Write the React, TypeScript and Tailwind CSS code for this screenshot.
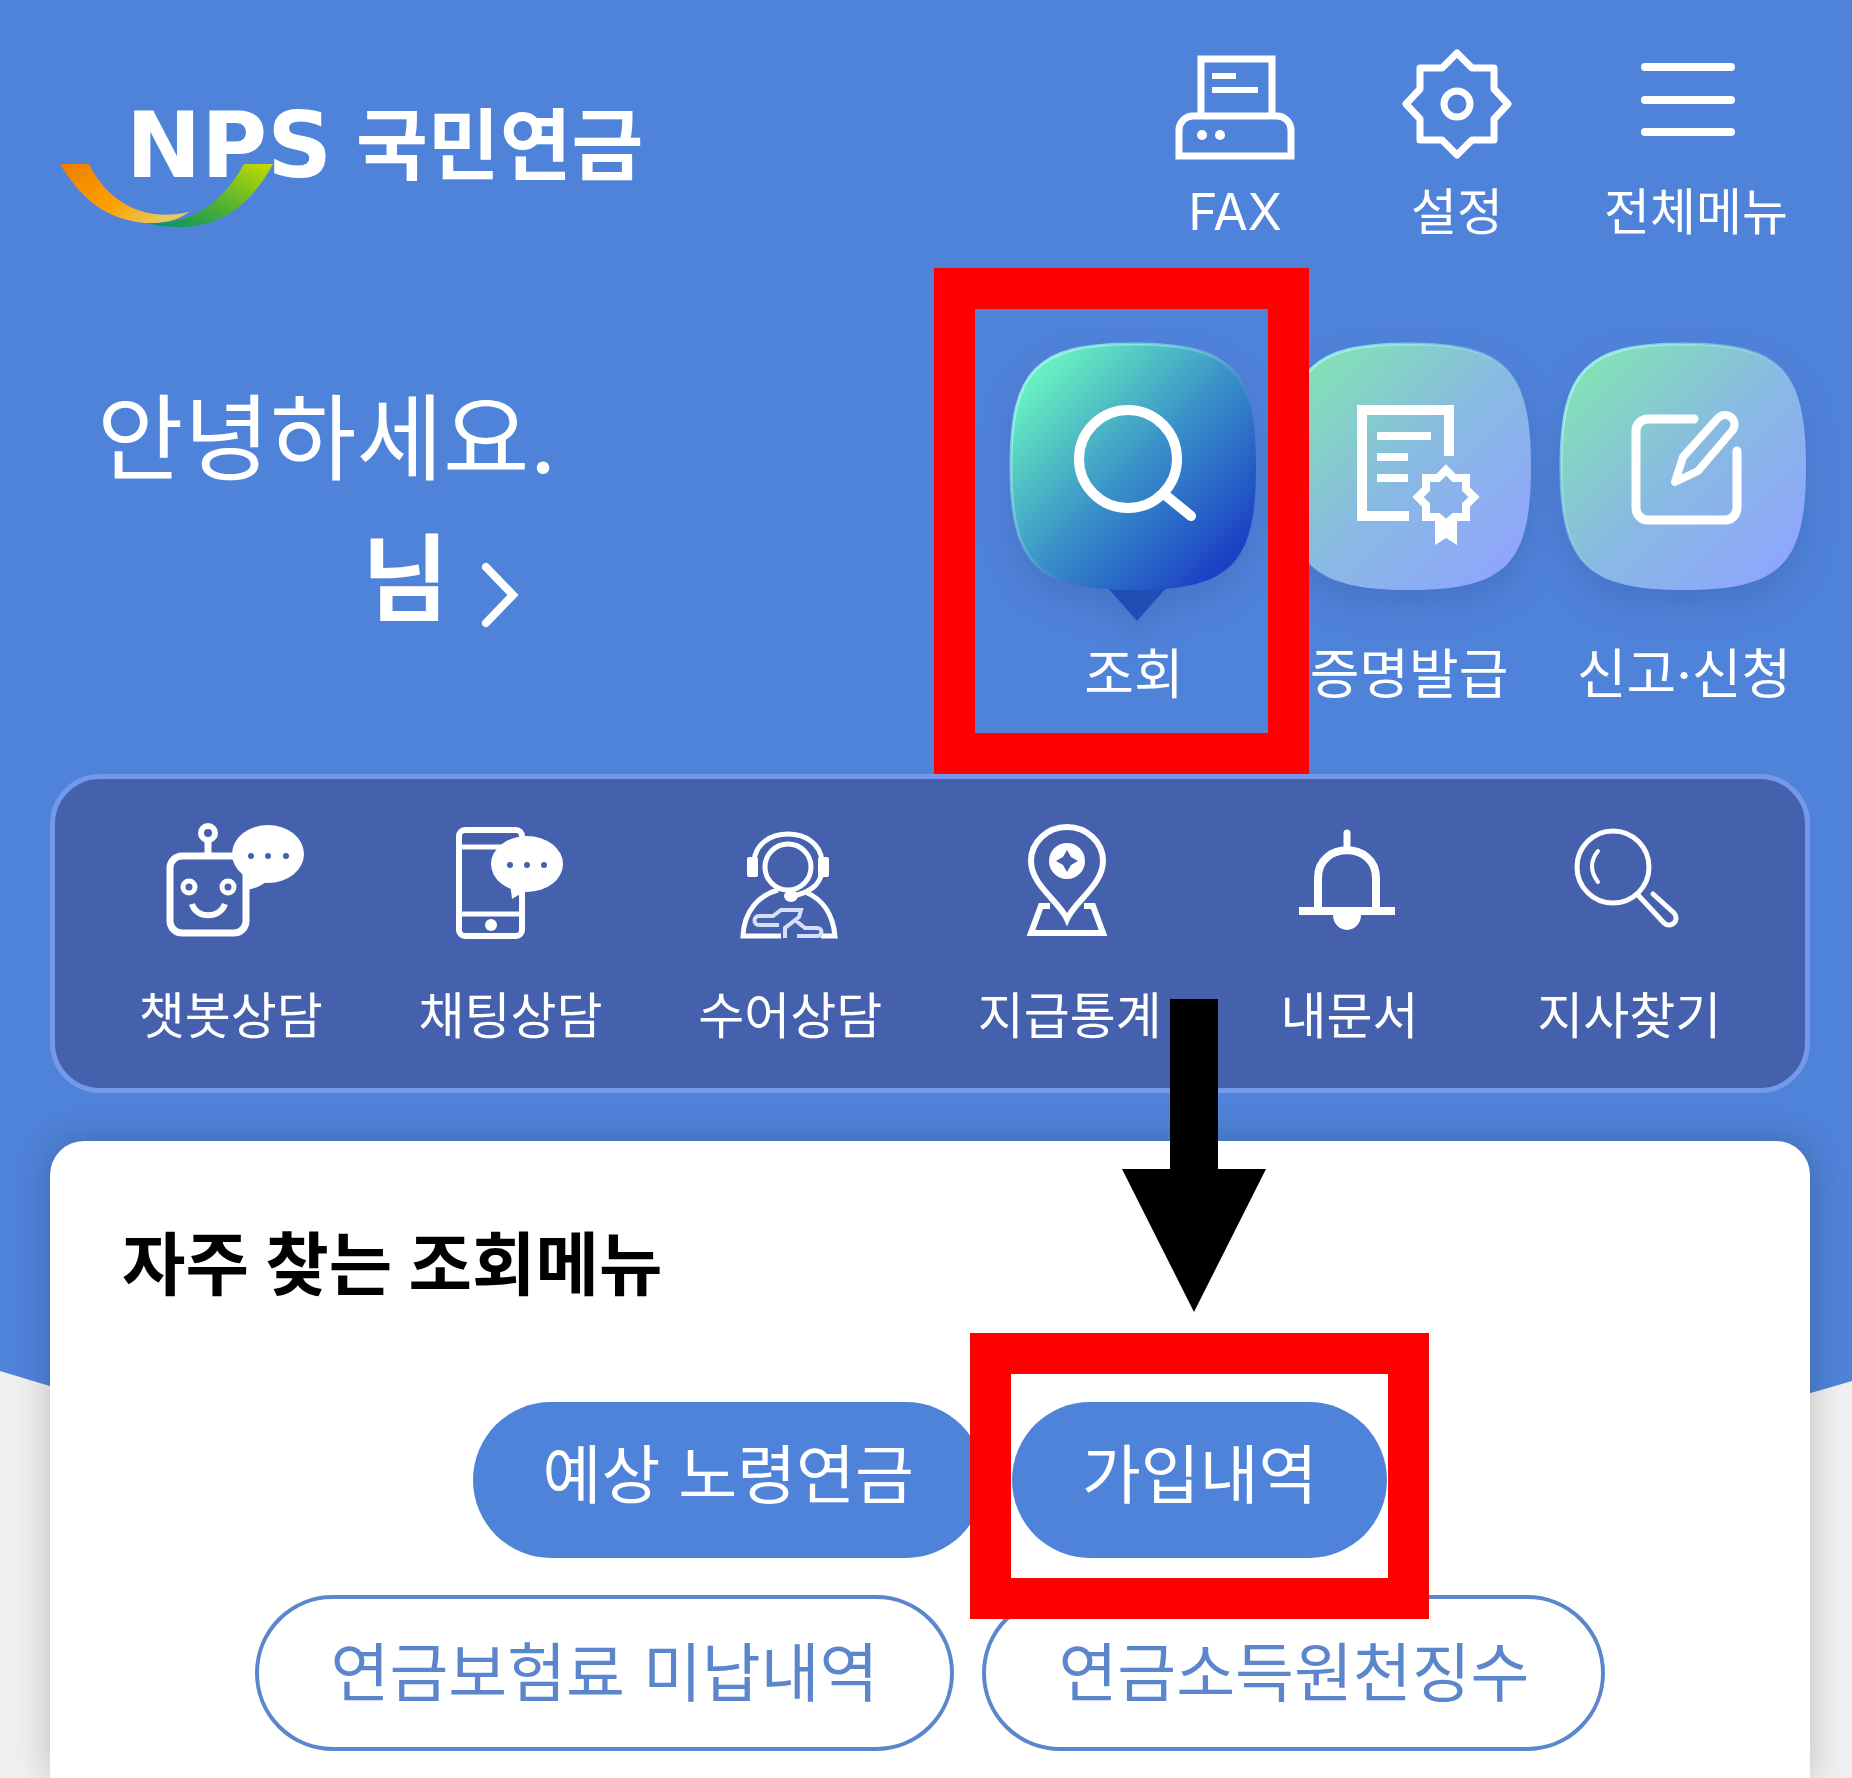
import React from 'react';

interface IconItem {
  label: string;
  icon: React.ReactNode;
}

/* Header icons */

const FaxIcon = () => (
  <svg width="120" height="112" viewBox="0 -6 120 112" fill="none" stroke="white" strokeWidth="7">
    <path d="M26 62V5H97V62" />
    <path d="M4 102V76a14 14 0 0 1 14-14h84a14 14 0 0 1 14 14v26z" />
    <path d="M37 22H61M37 36H83" strokeWidth="6" />
    <circle cx="27" cy="81" r="5" fill="white" stroke="none" />
    <circle cx="45" cy="81" r="5" fill="white" stroke="none" />
  </svg>
);

const GearIcon = () => (
  <svg width="112" height="112" viewBox="-56 -56 112 112" fill="none" stroke="white" strokeWidth="7" strokeLinejoin="round">
    <path d="M0-51L15-36H37V-15L51 0L37 15V36H15L0 51L-15 36H-37V15L-51 0L-37-15V-36H-15Z" />
    <circle r="13" />
  </svg>
);

const MenuIcon = () => (
  <svg width="112" height="84" viewBox="0 0 112 84" stroke="white" strokeWidth="8" strokeLinecap="round">
    <path d="M5 5H91M5 38H91M5 70H91" />
  </svg>
);

/* Speech-bubble buttons on the right of the greeting */

const SHAPE = 'M124 1C221 1 246 27 246 124S221 247 124 247S1 221 1 124S27 1 124 1Z';

const Bubble = ({ id, stops, active, children }: {
  id: string;
  stops: string[];
  active?: boolean;
  children: React.ReactNode;
}) => (
  <svg
    width="248"
    height="248"
    viewBox="0 0 248 248"
    fill="none"
    className="overflow-visible drop-shadow-[0_16px_16px_rgba(50,80,160,0.3)]"
  >
    <defs>
      <linearGradient id={id} x1="0.12" y1="0.12" x2="0.88" y2="0.88">
        <stop offset="0" stopColor={stops[0]} />
        <stop offset="0.5" stopColor={stops[1]} />
        <stop offset="1" stopColor={stops[2]} />
      </linearGradient>
      <linearGradient id={`${id}-edge`} x1="0" y1="0" x2="1" y2="1">
        <stop offset="0" stopColor="#a5f5f0" />
        <stop offset="0.6" stopColor="#a5f5f0" stopOpacity="0" />
      </linearGradient>
    </defs>
    {active && <path d="M97 244H157L127 278Z" fill="#1f4fb4" />}
    <path d={SHAPE} fill={`url(#${id})`} stroke={`url(#${id}-edge)`} strokeWidth="3" />
    {children}
  </svg>
);

const SearchBubble = () => (
  <Bubble id="bubble-search" stops={['#67efc0', '#3a92c8', '#1b41c6']} active>
    <g stroke="white" strokeWidth="10" strokeLinecap="round">
      <circle cx="118" cy="116" r="49" />
      <path d="M154 151L181 173" />
    </g>
  </Bubble>
);

const CertificateBubble = () => (
  <Bubble id="bubble-cert" stops={['#84dfb8', '#88bae2', '#8fa7fb']}>
    <g stroke="white">
      <path d="M164 113V67H77V173H124" strokeWidth="10" />
      <path d="M92 93H146M92 114H123M92 135H123" strokeWidth="8" />
      <path
        d="M161 127L169 135H181V146L189 154L181 162V174H169L161 181L153 174H141V162L133 154L141 146V135H153Z"
        strokeWidth="8"
      />
      <path d="M150 178H172V202L161 195L150 202Z" fill="white" stroke="none" />
    </g>
  </Bubble>
);

const EditBubble = () => (
  <Bubble id="bubble-edit" stops={['#84dfb8', '#88bae2', '#8fa7fb']}>
    <g stroke="white" strokeWidth="9" strokeLinecap="round" strokeLinejoin="round">
      <path d="M134 76H88a12 12 0 0 0-12 12V165a12 12 0 0 0 12 12H165a12 12 0 0 0 12-12V108" />
      <path d="M115 139L123 114L158 75A9 9 0 0 1 172 88L138 128Z" strokeWidth="8" />
    </g>
  </Bubble>
);

/* Quick panel icons */

const RobotIcon = () => (
  <svg width="146" height="116" viewBox="-8 0 146 116" fill="none" stroke="white" strokeWidth="7">
    <rect x="4" y="34" width="76" height="77" rx="12" />
    <circle cx="42" cy="11" r="7" strokeWidth="6" />
    <path d="M42 18V34" />
    <circle cx="23" cy="65" r="6" strokeWidth="5" />
    <circle cx="62" cy="65" r="6" strokeWidth="5" />
    <path d="M26 82C30 97 54 97 59 82" strokeWidth="6" />
    <ellipse cx="102" cy="32" rx="36" ry="29" fill="white" stroke="none" />
    <path d="M80 50V68Q94 66 102 58Z" fill="white" stroke="none" />
    <g fill="#4561ad" stroke="none">
      <circle cx="85" cy="34" r="3" />
      <circle cx="102" cy="34" r="3" />
      <circle cx="120" cy="34" r="3" />
    </g>
  </svg>
);

const PhoneIcon = () => (
  <svg width="108" height="118" viewBox="0 -6 108 118" fill="none" stroke="white" strokeWidth="6">
    <rect x="3" y="3" width="63" height="106" rx="6" />
    <path d="M3 20H50M3 87H66" strokeWidth="5" />
    <circle cx="35" cy="98" r="6" fill="white" stroke="none" />
    <ellipse cx="71" cy="37" rx="36" ry="28" fill="white" stroke="none" />
    <path d="M54 56L56 72L76 60Z" fill="white" stroke="none" />
    <g fill="#4561ad" stroke="none">
      <circle cx="54" cy="38" r="3" />
      <circle cx="71" cy="38" r="3" />
      <circle cx="88" cy="38" r="3" />
    </g>
  </svg>
);

const SignLanguageIcon = () => (
  <svg width="102" height="118" viewBox="0 -10 102 118" fill="none" stroke="white" strokeWidth="5">
    <circle cx="49" cy="36" r="23" />
    <path d="M15 30C18 -6 80 -6 83 30" />
    <rect x="8" y="26" width="11" height="20" rx="2" fill="white" stroke="none" />
    <rect x="79" y="26" width="11" height="20" rx="2" fill="white" stroke="none" />
    <path d="M83 42C80 54 72 60 58 64" />
    <ellipse cx="52" cy="65" rx="7" ry="6" fill="white" stroke="none" />
    <path d="M42 105H4C5 80 20 64 39 59M66 61C84 68 94 84 96 105H82" />
    <path
      d="M40 94H20C14 94 14 85 20 85H34L42 79H62L60 86L46 97V107M56 89L66 97H78C84 97 84 105 78 105H58"
      stroke="#d5defa"
      strokeWidth="4"
    />
  </svg>
);

const PinIcon = () => (
  <svg width="88" height="114" viewBox="0 0 88 114" fill="none" stroke="white" strokeWidth="6">
    <path d="M41 96C33 78 5 62 5 38A36 34 0 0 1 77 38C77 62 49 78 41 96Z" />
    <circle cx="41" cy="38" r="18" fill="white" stroke="none" />
    <path d="M41 27L45 34L52 38L45 42L41 49L37 42L30 38L37 34Z" fill="#4561ad" stroke="none" />
    <path d="M24 83H15L5 110H77L67 83H58" />
  </svg>
);

const BellIcon = () => (
  <svg width="102" height="102" viewBox="0 0 102 102" fill="none" stroke="white">
    <path d="M49 4V18" strokeWidth="7" strokeLinecap="round" />
    <path d="M20 82V49C20 12 78 12 78 49V82" strokeWidth="8" />
    <path d="M1 82H97" strokeWidth="8" />
    <path d="M35 86H63A14 15 0 0 1 35 86Z" fill="white" stroke="none" />
  </svg>
);

const MagnifierIcon = () => (
  <svg width="112" height="106" viewBox="0 0 112 106" fill="none" stroke="white" strokeWidth="5" strokeLinecap="round">
    <circle cx="40" cy="40" r="36" />
    <path d="M25 24Q13 39 25 55" strokeWidth="4" />
    <path d="M65 68L91 96A7 7 0 0 0 101 86L80 67" strokeWidth="5" />
  </svg>
);

const headerItems: IconItem[] = [
  { label: 'FAX', icon: <FaxIcon /> },
  { label: '설정', icon: <GearIcon /> },
  { label: '전체메뉴', icon: <MenuIcon /> }
];

const mainItems: IconItem[] = [
  { label: '조회', icon: <SearchBubble /> },
  { label: '증명발급', icon: <CertificateBubble /> },
  { label: '신고·신청', icon: <EditBubble /> }
];

const quickItems: IconItem[] = [
  { label: '챗봇상담', icon: <RobotIcon /> },
  { label: '채팅상담', icon: <PhoneIcon /> },
  { label: '수어상담', icon: <SignLanguageIcon /> },
  { label: '지급통계', icon: <PinIcon /> },
  { label: '내문서', icon: <BellIcon /> },
  { label: '지사찾기', icon: <MagnifierIcon /> }
];

const Logo = () => (
  <h1 className="relative flex items-center gap-6 pl-[66px] leading-[102px] font-bold text-white">
    <span className="font-['DejaVu_Sans'] text-[90px]">NPS</span>
    <span className="text-[78px]">국민연금</span>
    <svg className="absolute top-[69px] left-0" width="214" height="64" viewBox="0 0 214 66" preserveAspectRatio="none" aria-hidden="true">
      <defs>
        <linearGradient id="swoosh-orange" x1="0" y1="0" x2="1" y2="0.6">
          <stop offset="0" stopColor="#f07c00" />
          <stop offset="0.6" stopColor="#fba200" />
          <stop offset="1" stopColor="#e8c860" />
        </linearGradient>
        <linearGradient id="swoosh-green" x1="0" y1="1" x2="1" y2="0">
          <stop offset="0" stopColor="#00906a" />
          <stop offset="0.45" stopColor="#4cb034" />
          <stop offset="1" stopColor="#c6dc00" />
        </linearGradient>
      </defs>
      <path d="M0 0H29C50 44 90 60 130 49C112 62 94 62 78 60C42 54 20 34 0 0Z" fill="url(#swoosh-orange)" />
      <path d="M184 0H213C190 44 158 66 118 65C106 65 96 63 88 61C130 62 160 44 184 0Z" fill="url(#swoosh-green)" />
    </svg>
  </h1>
);

export default function App() {
  return (
    <div className="relative isolate flex min-h-screen flex-col overflow-hidden bg-[#f0f0f0] font-['Inter','Noto_Sans_CJK_KR',sans-serif]">
      {/* Blue backdrop that ends in a shallow point behind the card */}
      <div className="absolute inset-x-0 top-0 -z-10 h-[1650px] bg-[#4f83d9] [clip-path:polygon(0_0,100%_0,100%_1381px,50%_100%,0_1371px)]" />

      <header className="flex items-start justify-between pt-12 pr-16 pl-[60px]">
        <div className="pt-[47px]">
          <Logo />
        </div>
        <nav className="flex gap-18">
          {headerItems.map(item => (
            <button key={item.label} className="flex min-w-[150px] flex-col items-center gap-[22px] text-white">
              <span className="flex h-28 items-center">{item.icon}</span>
              <span className="text-[50px] leading-[60px]">{item.label}</span>
            </button>
          ))}
        </nav>
      </header>

      <section className="mt-[101px] flex items-start justify-between pr-11 pl-[97px] text-white">
        <div className="flex flex-col gap-[30px] pt-[41px] text-[94px] leading-[110px]">
          <p>안녕하세요.</p>
          <button className="flex items-center justify-end gap-8 pr-9 font-bold">
            님
            <svg className="mt-8" width="40" height="66" viewBox="0 0 40 66" fill="none" stroke="white" strokeWidth="8" strokeLinecap="round" aria-hidden="true">
              <path d="M6 5L33 33L6 61" />
            </svg>
          </button>
        </div>
        <div className="flex gap-[27px]">
          {mainItems.map((item, i) => (
            <button key={item.label} className="relative flex w-[248px] flex-col items-center gap-[52px]">
              {item.icon}
              <span className="text-[54px] leading-[64px] whitespace-nowrap">{item.label}</span>
              {i === 0 && (
                <span className="absolute -top-[75px] -right-[51px] -bottom-[67px] -left-[76px] z-10 border-[41px] border-[#ff0000]" />
              )}
            </button>
          ))}
        </div>
      </section>

      <main className="flex grow flex-col gap-12 pt-[67px] pr-[42px] pl-[50px]">
        <nav className="grid grid-cols-6 rounded-[50px] border-[5px] border-[#7499ea] bg-[#4561ad] px-9 pt-[39px] pb-[38px] text-white">
          {quickItems.map(item => (
            <button key={item.label} className="flex flex-col items-center gap-11">
              <span className="flex h-[124px] items-center">{item.icon}</span>
              <span className="mb-1 text-[50px] leading-[60px]">{item.label}</span>
            </button>
          ))}
        </nav>

        <section className="grow rounded-t-[34px] bg-white pt-[84px] shadow-[0_0_36px_rgba(0,0,0,0.22)]">
          <h2 className="pl-[72px] text-[69px] leading-[80px] font-bold text-black">자주 찾는 조회메뉴</h2>
          <div className="mt-[97px] flex flex-col gap-[37px] text-[64px]">
            <div className="flex justify-center gap-7">
              <button className="h-[156px] rounded-full bg-[#4f83d9] px-[70px] pb-[10px] text-white">예상 노령연금</button>
              <button className="relative h-[156px] rounded-full bg-[#4f83d9] px-[70px] pb-[10px] text-white">
                가입내역
                <span className="absolute -inset-x-[42px] -top-[69px] -bottom-[61px] border-[41px] border-[#ff0000]" />
                <svg className="absolute bottom-[246px] left-[110px]" width="144" height="313" viewBox="0 0 144 313" aria-hidden="true">
                  <path d="M48 0H96V170H144L72 313L0 170H48Z" fill="black" />
                </svg>
              </button>
            </div>
            <div className="flex justify-center gap-7">
              <button className="h-[156px] rounded-full border-4 border-[#5b86cc] px-[72px] text-[#5b86cc]">연금보험료 미납내역</button>
              <button className="h-[156px] rounded-full border-4 border-[#5b86cc] px-[72px] text-[#5b86cc]">연금소득원천징수</button>
            </div>
          </div>
        </section>
      </main>
    </div>
  );
}
